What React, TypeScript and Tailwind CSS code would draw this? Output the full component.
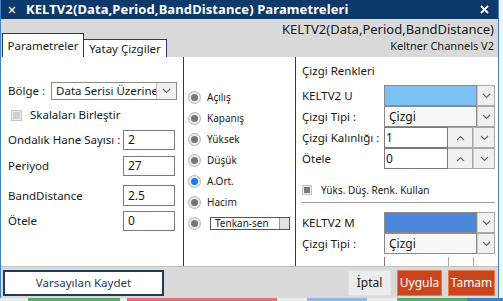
import React from 'react';

const Chevron = ({ up = false }: { up?: boolean }) => (
  <svg width="9" height="6" viewBox="0 0 9 6" className="block">
    <polyline
      points={up ? '1,5 4.5,1.5 8,5' : '1,1 4.5,4.5 8,1'}
      fill="none"
      stroke="#6b6b6b"
      strokeWidth="1.2"
    />
  </svg>
);

const DropBtn = ({ w = 'w-[18px]' }: { w?: string }) => (
  <div className={`${w} h-full flex items-center justify-center bg-[#f0f0f0] border border-[#a8a8a8] border-l-[#c8c8c8]`}>
    <Chevron />
  </div>
);

const Radio = ({ label, checked = false }: { label: string; checked?: boolean }) => (
  <div className="h-[21px] shrink-0 flex items-center">
    <div className="w-[13px] h-[13px] rounded-full border border-[#b4b4b4] bg-[#ececec] flex items-center justify-center">
      <div className={`w-[7px] h-[7px] rounded-full ${checked ? 'bg-[#1b7ae6]' : 'bg-[#777]'}`} />
    </div>
    <span className="ml-[6px] text-[10px] text-[#222]">{label}</span>
  </div>
);

const NumBox = ({ value }: { value: string }) => (
  <div className="ml-auto w-[52px] h-full border border-[#7a7a7a] bg-white px-[4px] flex items-center text-[12px]">{value}</div>
);

const LeftRow = ({ label, value, cls }: { label: string; value: string; cls: string }) => (
  <div className={`shrink-0 flex items-center pr-[8px] ${cls}`}>
    <span className="whitespace-nowrap">{label}</span>
    <NumBox value={value} />
  </div>
);

const Spin = ({ label, value }: { label: string; value: string }) => (
  <div className="h-[21px] shrink-0 flex items-center">
    <span className="w-[82px] shrink-0 whitespace-nowrap">{label}</span>
    <div className="flex-1 h-full flex">
      <div className="flex-1 h-full border border-[#7a7a7a] bg-white px-[1px] flex items-center text-[12px]">{value}</div>
      <div className="w-[25px] h-full flex items-center justify-center bg-[#f0f0f0] border border-[#a8a8a8] border-l-0">
        <Chevron up />
      </div>
      <DropBtn w="w-[22px]" />
    </div>
  </div>
);

const ColorRow = ({ label, color }: { label: string; color: string }) => (
  <div className="h-[21px] shrink-0 flex items-center">
    <span className="w-[82px] shrink-0">{label}</span>
    <div className="flex-1 h-full flex">
      <div className={`flex-1 h-full border border-[#8a8a8a] ${color}`} />
      <DropBtn />
    </div>
  </div>
);

const TypeRow = () => (
  <div className="h-[21px] shrink-0 flex items-center">
    <span className="w-[82px] shrink-0">Çizgi Tipi :</span>
    <div className="flex-1 h-full flex">
      <div className="flex-1 h-full border border-[#8a8a8a] bg-[#f7f7f7] px-[4px] flex items-center text-[12px]">Çizgi</div>
      <DropBtn />
    </div>
  </div>
);

export default function App() {
  return (
    <div className="w-[503px] h-[301px] overflow-hidden bg-[#eef3f8] font-['Noto_Sans',sans-serif] text-[11.5px] text-[#1a1a1a]">
      <div className="w-[499px] h-[298px] flex flex-col border-x border-[#3f80c8] bg-white">
        {/* title bar */}
        <div className="h-[19px] shrink-0 bg-[#0d396b] flex items-center text-white">
          <svg width="8" height="8" viewBox="0 0 8 8" className="ml-[7px]">
            <path d="M1 1L7 7M7 1L1 7" stroke="white" strokeWidth="1.3" />
          </svg>
          <span className="ml-[10px] font-bold text-[13px] tracking-[0.1px]">KELTV2(Data,Period,BandDistance) Parametreleri</span>
          <svg width="9" height="9" viewBox="0 0 9 9" className="ml-auto mr-[9px]">
            <path d="M1 1L8 8M8 1L1 8" stroke="white" strokeWidth="1.8" />
          </svg>
        </div>

        {/* header */}
        <div className="h-[38px] shrink-0 bg-[#d9d9d9] flex">
          <div className="flex items-end pl-[1px]">
            <div className="h-[24px] w-[82px] bg-white border border-b-0 border-[#1f3d6b] flex items-center justify-center text-[11.5px]">
              Parametreler
            </div>
            <div className="h-[18px] w-[83px] bg-white border border-b-0 border-l-0 border-[#1f3d6b] flex items-center justify-center text-[11.5px]">
              Yatay Çizgiler
            </div>
          </div>
          <div className="ml-auto pr-[4px] flex flex-col items-end pt-[2px]">
            <span className="text-[13px] leading-[17px]">KELTV2(Data,Period,BandDistance)</span>
            <span className="text-[11px] leading-[15px]">Keltner Channels V2</span>
          </div>
        </div>

        {/* content */}
        <div className="h-[209px] shrink-0 flex">
          <div className="w-[183px] shrink-0 border-r border-[#1f3d6b] pl-[7px] flex flex-col">
            <div className="mt-[25px] h-[18px] shrink-0 flex items-center">
              <span>Bölge :</span>
              <div className="ml-[6px] w-[126px] h-full flex border border-[#8a8a8a] bg-white">
                <div className="flex-1 overflow-hidden whitespace-nowrap pl-[4px] flex items-center">Data Serisi Üzerine</div>
                <div className="w-[20px] h-full flex items-center justify-center bg-[#f0f0f0] border-l border-[#c0c0c0]">
                  <Chevron />
                </div>
              </div>
            </div>
            <div className="h-[22px] mt-[4px] shrink-0 flex items-center">
              <div className="ml-[3px] w-[11px] h-[11px] border border-[#c4c4c4] bg-[#ececec] flex items-center justify-center">
                <div className="w-[7px] h-[7px] bg-[#cfcfcf]" />
              </div>
              <span className="ml-[8px]">Skalaları Birleştir</span>
            </div>
            <LeftRow label="Ondalık Hane Sayısı :" value="2" cls="mt-[4px] h-[20px]" />
            <LeftRow label="Periyod" value="27" cls="mt-[6px] h-[20px]" />
            <LeftRow label="BandDistance" value="2.5" cls="mt-[9px] h-[21px]" />
            <LeftRow label="Ötele" value="0" cls="mt-[5px] h-[20px]" />
          </div>

          <div className="w-[112px] shrink-0 border-r border-[#1f3d6b] pl-[4px] pt-[30px] flex flex-col">
            <Radio label="Açılış" />
            <Radio label="Kapanış" />
            <Radio label="Yüksek" />
            <Radio label="Düşük" />
            <Radio label="A.Ort." checked />
            <Radio label="Hacim" />
            <div className="h-[21px] shrink-0 flex items-center">
              <div className="w-[13px] h-[13px] rounded-full border border-[#b4b4b4] bg-[#ececec] flex items-center justify-center">
                <div className="w-[7px] h-[7px] rounded-full bg-[#777]" />
              </div>
              <div className="ml-[9px] w-[80px] h-[13px] border border-[#555] flex bg-white">
                <span className="flex-1 pl-[4px] text-[10px] leading-[11px]">Tenkan-sen</span>
                <div className="w-[10px] bg-[#e2e2e2] border-l border-[#999]" />
              </div>
            </div>
          </div>

          <div className="flex-1 overflow-hidden pl-[6px] pr-[3px] flex flex-col">
            <div className="h-[28px] shrink-0 flex items-center">Çizgi Renkleri</div>
            <ColorRow label="KELTV2 U" color="bg-[#7cc2f4]" />
            <TypeRow />
            <Spin label="Çizgi Kalınlığı :" value="1" />
            <Spin label="Ötele" value="0" />
            <div className="mt-[11px] h-[20px] shrink-0 flex items-center">
              <div className="w-[10px] h-[10px] border border-[#c4c4c4] bg-[#e8e8e8] flex items-center justify-center">
                <div className="w-[6px] h-[6px] bg-[#7a7a7a]" />
              </div>
              <span className="ml-[9px] text-[10px]">Yüks. Düş. Renk. Kullan</span>
            </div>
            <div className="mt-[2px] shrink-0 border-t border-[#9a9a9a]" />
            <div className="mt-[9px] shrink-0 flex flex-col">
              <ColorRow label="KELTV2 M" color="bg-[#4b87da]" />
              <TypeRow />
              {/* next row, clipped by the panel */}
              <div className="mt-[3px] h-[21px] shrink-0 flex">
                <div className="w-[82px] shrink-0" />
                <div className="flex-1 border-l border-[#7a7a7a]" />
                <div className="w-[25px] border-l border-[#a8a8a8]" />
                <div className="w-[22px] border-l border-[#a8a8a8]" />
              </div>
            </div>
          </div>
        </div>

        {/* bottom bar */}
        <div className="flex-1 bg-[#d9d9d9] border-t border-[#c4c4c4] flex items-center pl-[2px] pr-[3px]">
          <div className="w-[161px] h-[26px] bg-white border-2 border-[#1f3864] flex items-center justify-center text-[#1f3864] text-[11.5px]">
            Varsayılan Kaydet
          </div>
          <div className="ml-auto w-[43px] h-[26px] bg-[#ececec] border border-[#e0e0e0] flex items-center justify-center text-[12px]">
            İptal
          </div>
          <div className="ml-[6px] w-[45px] h-[26px] bg-[#c9461d] border border-[#e8784e] flex items-center justify-center text-white text-[12px]">
            Uygula
          </div>
          <div className="ml-[6px] w-[47px] h-[26px] bg-[#c9461d] border border-[#e8784e] flex items-center justify-center text-white text-[12px]">
            Tamam
          </div>
        </div>
      </div>
      <div className="h-[3px] flex">
        <div className="w-[28px] bg-[#e8ecef]" />
        <div className="w-[92px] bg-[#5daa6a]" />
        <div className="w-[7px] bg-[#e8ecef]" />
        <div className="w-[150px] bg-[#e2707a]" />
        <div className="w-[30px] bg-[#e8ecef]" />
        <div className="w-[60px] bg-[#8fb8de]" />
        <div className="w-[30px] bg-[#e8ecef]" />
        <div className="w-[70px] bg-[#5daa6a]" />
        <div className="flex-1 bg-[#3f80c8]" />
      </div>
    </div>
  );
}
